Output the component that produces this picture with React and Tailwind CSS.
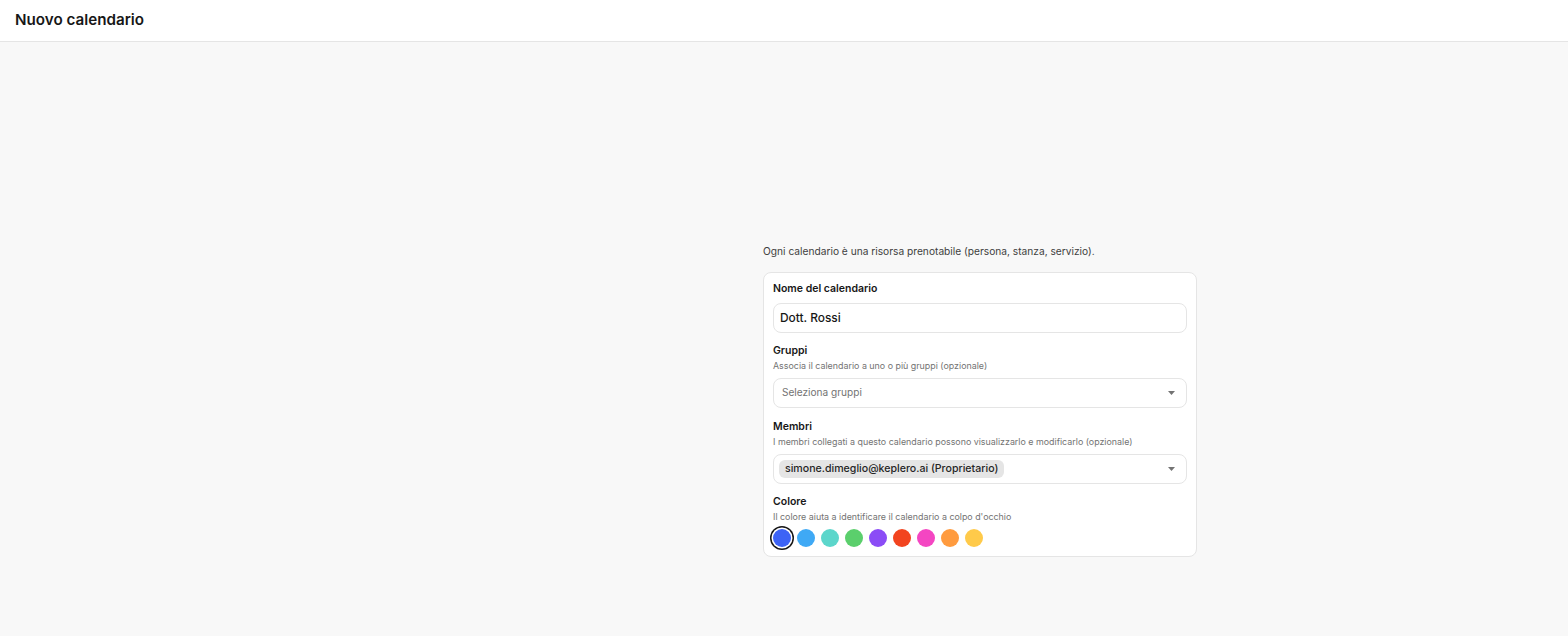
import { useState } from "react";

const colors = ["#3d63f5", "#3fa9f5", "#5cd6cb", "#5bcf6c", "#8b4cf6", "#f2441f", "#f446c2", "#ff9b3f", "#ffca4a"];

function Caret() {
  return (
    <svg width="7" height="4" viewBox="0 0 7 4" className="text-neutral-500">
      <path d="M0 0h7L3.5 4z" fill="currentColor" />
    </svg>
  );
}

function Field({ label, hint, className = "", children }) {
  return (
    <div className={className}>
      <p className="text-[10.5px] font-semibold leading-[16px] text-neutral-900">{label}</p>
      {hint && <p className="text-[8.9px] leading-[14px] text-neutral-500">{hint}</p>}
      <div className={hint ? "mt-[5px]" : "mt-[6px]"}>{children}</div>
    </div>
  );
}

export default function App() {
  const [selected, setSelected] = useState(0);

  return (
    <div className="min-h-[636px] bg-[#f8f8f8] font-['Inter',sans-serif] text-neutral-900">
      <header className="flex h-[42px] items-center border-b border-neutral-200 bg-white px-[15px]">
        <h1 className="text-[15.2px] font-semibold">Nuovo calendario</h1>
      </header>
      <main className="pl-[763px] pt-[200px]">
        <div className="w-[434px]">
          <p className="text-[10.2px] leading-[18px] text-neutral-700">
            Ogni calendario è una risorsa prenotabile (persona, stanza, servizio).
          </p>
          <section className="mt-[12px] flex flex-col gap-[10px] rounded-lg border border-neutral-200 bg-white px-[9px] pb-[9px] pt-[8px]">
            <Field label="Nome del calendario">
              <div className="flex h-[30px] items-center rounded-lg border border-neutral-200 px-[6px] text-[11.9px] font-medium">
                Dott. Rossi
              </div>
            </Field>
            <Field label="Gruppi" hint="Associa il calendario a uno o più gruppi (opzionale)">
              <div className="flex h-[30px] items-center justify-between rounded-lg border border-neutral-200 pl-[8px] pr-[11px]">
                <span className="text-[10.1px] text-neutral-500">Seleziona gruppi</span>
                <Caret />
              </div>
            </Field>
            <Field
              className="mt-[1px]"
              label="Membri"
              hint="I membri collegati a questo calendario possono visualizzarlo e modificarlo (opzionale)"
            >
              <div className="flex h-[30px] items-center justify-between rounded-lg border border-neutral-200 pl-[5px] pr-[11px]">
                <span className="rounded-md bg-neutral-200 px-[6px] text-[10.6px] font-medium leading-[18px] text-neutral-800">
                  simone.dimeglio@keplero.ai (Proprietario)
                </span>
                <Caret />
              </div>
            </Field>
            <Field label="Colore" hint="Il colore aiuta a identificare il calendario a colpo d'occhio">
              <div className="flex gap-[6px]">
                {colors.map((c, i) => (
                  <button
                    key={c}
                    type="button"
                    onClick={() => setSelected(i)}
                    className={`h-[18px] w-[18px] rounded-full ${selected === i ? "ring-[1.5px] ring-neutral-900 ring-offset-[1.5px]" : ""}`}
                    style={{ backgroundColor: c }}
                  />
                ))}
              </div>
            </Field>
          </section>
        </div>
      </main>
    </div>
  );
}
